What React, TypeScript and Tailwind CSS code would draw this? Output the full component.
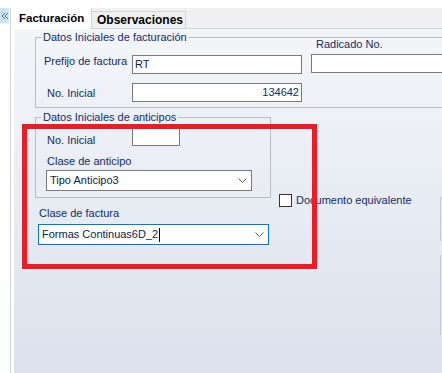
import React from 'react';

const ink = 'text-[#102d68]';

function Chevron() {
  return (
    <svg width="9" height="5" viewBox="0 0 9 5" className="shrink-0">
      <path d="M0.5 0.5 L4.5 4.5 L8.5 0.5" fill="none" stroke="#5f5f5f" strokeWidth="1" />
    </svg>
  );
}

function Combo({ value, width, focused, caret }: { value: string; width: string; focused?: boolean; caret?: boolean }) {
  return (
    <div
      className={`flex h-[21px] items-center justify-between bg-white pl-[3px] pr-[4px] border ${width} ${
        focused ? 'border-[#0078d7]' : 'border-[#7a7a7a]'
      }`}
    >
      <span className="flex items-center text-[11px] leading-[13px] text-[#0b1f4d]">
        {value}
        {caret && <span className="ml-[1px] h-[14px] border-l border-black" />}
      </span>
      <Chevron />
    </div>
  );
}

export default function App() {
  return (
    <div className="relative h-[373px] w-[442px] overflow-hidden bg-white font-['Liberation_Sans',Arial,sans-serif]">
      <div className="flex h-full pt-[8px]">
        {/* collapsed side panel */}
        <div className="w-[10px] shrink-0">
          <div className="flex h-[15px] w-[9px] items-center justify-center bg-[#cde4f8]">
            <svg width="8" height="8" viewBox="0 0 8 8">
              <path d="M4 1 L1 4 L4 7 M7 1 L4 4 L7 7" fill="none" stroke="#4d73aa" strokeWidth="1" />
            </svg>
          </div>
        </div>

        <div className="flex flex-1 flex-col border-l border-[#d4d4d4]">
          {/* tabs */}
          <div className="flex h-[21px] items-end bg-[#f0f0f0]">
            <div className="flex h-[21px] w-[81px] shrink-0 items-center border-r border-[#d4d4d4] bg-white pl-[8px] text-[11.5px] font-bold text-black">
              Facturación
            </div>
            <div className="flex h-[18px] w-[94px] shrink-0 items-center border-y border-r border-[#d4d4d4] bg-[#f0f0f0] pl-[5px] text-[12px] font-bold text-black">
              Observaciones
            </div>
            <div className="h-full flex-1 border-b border-[#d4d4d4]" />
          </div>

          {/* tab page */}
          <div className="flex flex-1 bg-white pl-[3px]">
            <div className="flex-1 bg-gradient-to-b from-[#f4f5f9] to-[#dbe2ed]">
              {/* Datos Iniciales de facturación */}
              <fieldset className="ml-[21px] mt-[2px] h-[77px] w-[440px] border border-[#bcbcbc]">
                <legend className={`ml-[5px] px-[2px] text-[11px] leading-[13px] ${ink}`}>
                  Datos Iniciales de facturación
                </legend>
                <div className="flex">
                  <div className="flex w-[266px] flex-col">
                    <div className="mt-[11px] flex items-start">
                      <span className={`ml-[8px] w-[88px] text-[11px] leading-[13px] ${ink}`}>Prefijo de factura</span>
                      <div className="flex h-[19px] w-[170px] items-center border border-[#7a7a7a] bg-white pl-[2px] text-[11px] text-[#0b1f4d]">
                        RT
                      </div>
                    </div>
                    <div className="mt-[9px] flex items-start">
                      <span className={`ml-[11px] mt-[4px] w-[85px] text-[11px] leading-[13px] ${ink}`}>No. Inicial</span>
                      <div className={`flex h-[19px] w-[170px] items-center justify-end border border-[#7a7a7a] bg-white pr-[2px] text-[11px] ${ink}`}>
                        134642
                      </div>
                    </div>
                  </div>
                  <div className="ml-[9px] -mt-[6px] flex flex-col">
                    <span className={`ml-[5px] text-[11px] leading-[13px] ${ink}`}>Radicado No.</span>
                    <div className="mt-[3px] h-[19px] w-[140px] border border-[#7a7a7a] bg-white" />
                  </div>
                </div>
              </fieldset>

              <div className="flex">
                <div className="ml-[21px] flex flex-col">
                  {/* Datos Iniciales de anticipos */}
                  <fieldset className="mt-[3px] h-[87px] w-[236px] border border-[#bcbcbc]">
                    <legend className={`ml-[5px] px-[2px] text-[11px] leading-[13px] ${ink}`}>
                      Datos Iniciales de anticipos
                    </legend>
                    <div className="mt-[4px] flex items-start">
                      <span className={`ml-[11px] mt-[6px] w-[85px] text-[11px] leading-[13px] ${ink}`}>No. Inicial</span>
                      <div className="h-[18px] w-[48px] border border-[#7a7a7a] bg-white" />
                    </div>
                    <span className={`ml-[11px] mt-[8px] block text-[11px] leading-[13px] ${ink}`}>Clase de anticipo</span>
                    <div className="ml-[10px] mt-[2px]">
                      <Combo value="Tipo Anticipo3" width="w-[206px]" />
                    </div>
                  </fieldset>

                  <span className={`ml-[4px] mt-[9px] text-[11px] leading-[13px] ${ink}`}>Clase de factura</span>
                  <div className="ml-[3px] mt-[4px]">
                    <Combo value="Formas Continuas6D_2" width="w-[231px]" focused caret />
                  </div>
                </div>

                <label className="ml-[8px] mt-[86px] flex h-[13px] items-center gap-[4px]">
                  <span className="h-[13px] w-[13px] border border-[#333333] bg-white" />
                  <span className={`text-[11px] leading-[13px] ${ink}`}>Documento equivalente</span>
                </label>
              </div>
            </div>
          </div>
        </div>
      </div>

      {/* right edge of a clipped control */}
      <div className="absolute left-[440px] top-[197px] h-[44px] w-px bg-[#c8cacd]" />
      <div className="absolute left-[440px] top-[255px] h-[80px] w-px bg-[#c8cacd]" />

      {/* red highlight annotation */}
      <div className="absolute left-[22px] top-[124px] h-[145px] w-[295px] border-[5px] border-[#ed1c24]" />
    </div>
  );
}
